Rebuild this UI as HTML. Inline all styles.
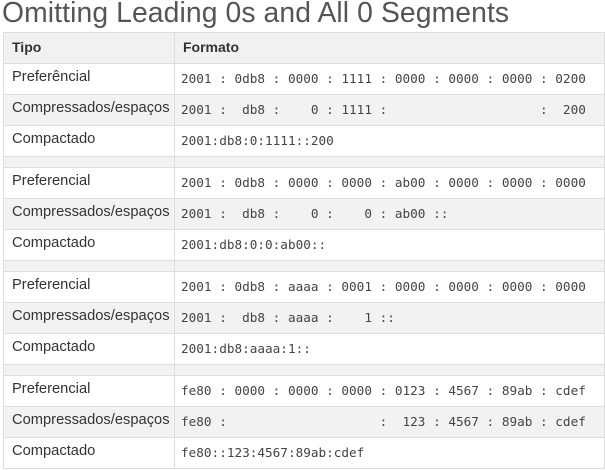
<!DOCTYPE html>
<html><head><meta charset="utf-8"><style>
body{margin:0;background:#fff;width:605px;height:470px;overflow:hidden;font-family:"Liberation Sans",sans-serif;color:#333}
h1{margin:0;position:absolute;left:2px;top:-4px;font-size:28.3px;font-weight:normal;color:#555;white-space:nowrap;letter-spacing:0.1px}
table{position:absolute;left:3px;top:32px;width:602px;border-collapse:collapse}
td,th{border:1px solid #ddd;height:30px;padding:0 0 0 8px;text-align:left;vertical-align:top;line-height:27px}
th{font-size:14px;background:#f1f1f1;font-weight:bold;line-height:28px}
td{font-size:14.7px}
td:first-child{width:162px}
td.m{font-family:"DejaVu Sans Mono",monospace;font-size:12.7px;white-space:pre;padding-left:6px;line-height:30px;color:#444}
tr.g td{background:#f2f2f2}
tr.s td{height:10px;background:#f2f2f2;padding:0}
</style></head><body>
<h1>Omitting Leading 0s and All 0 Segments</h1>
<table>
<tr><th>Tipo</th><th>Formato</th></tr>
<tr><td>Preferêncial</td><td class="m">2001 : 0db8 : 0000 : 1111 : 0000 : 0000 : 0000 : 0200</td></tr>
<tr class="g"><td>Compressados/espaços</td><td class="m">2001 :  db8 :    0 : 1111 :                    :  200</td></tr>
<tr><td>Compactado</td><td class="m">2001:db8:0:1111::200</td></tr>
<tr class="s"><td></td><td></td></tr>
<tr><td>Preferencial</td><td class="m">2001 : 0db8 : 0000 : 0000 : ab00 : 0000 : 0000 : 0000</td></tr>
<tr class="g"><td>Compressados/espaços</td><td class="m">2001 :  db8 :    0 :    0 : ab00 ::</td></tr>
<tr><td>Compactado</td><td class="m">2001:db8:0:0:ab00::</td></tr>
<tr class="s"><td></td><td></td></tr>
<tr><td>Preferencial</td><td class="m">2001 : 0db8 : aaaa : 0001 : 0000 : 0000 : 0000 : 0000</td></tr>
<tr class="g"><td>Compressados/espaços</td><td class="m">2001 :  db8 : aaaa :    1 ::</td></tr>
<tr><td>Compactado</td><td class="m">2001:db8:aaaa:1::</td></tr>
<tr class="s"><td></td><td></td></tr>
<tr><td>Preferencial</td><td class="m">fe80 : 0000 : 0000 : 0000 : 0123 : 4567 : 89ab : cdef</td></tr>
<tr class="g"><td>Compressados/espaços</td><td class="m">fe80 :                    :  123 : 4567 : 89ab : cdef</td></tr>
<tr><td>Compactado</td><td class="m">fe80::123:4567:89ab:cdef</td></tr>
</table>
</body></html>
